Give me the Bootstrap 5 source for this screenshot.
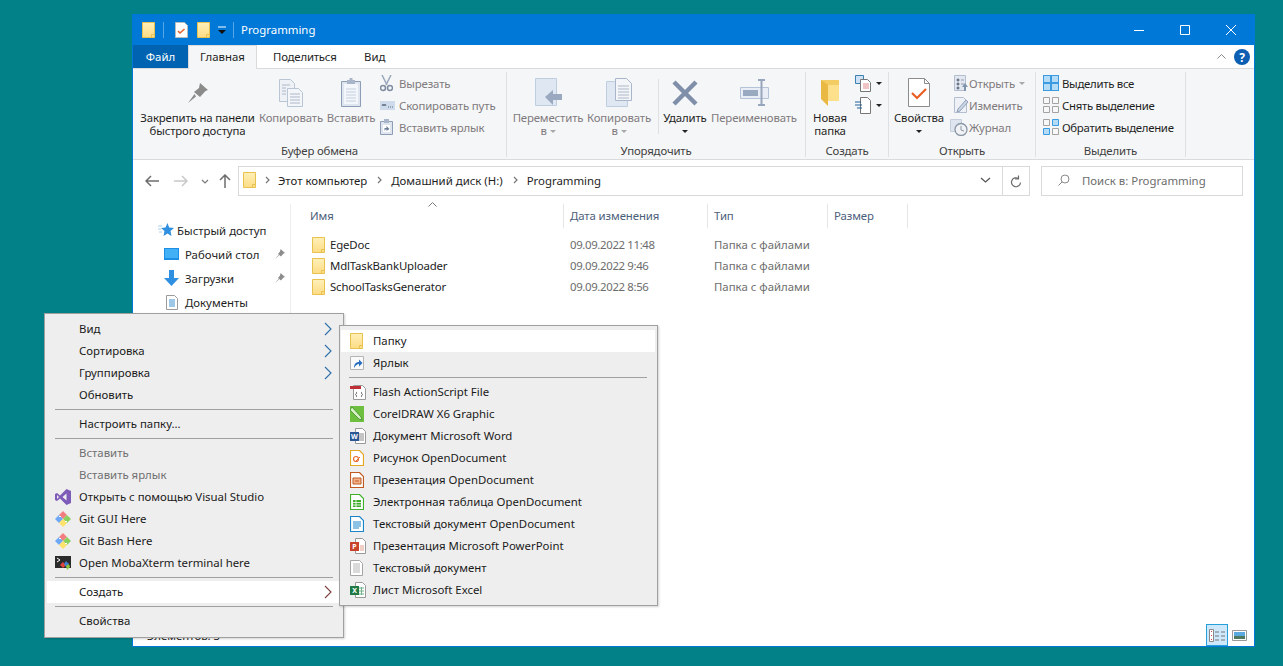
<!DOCTYPE html>
<html lang="ru">
<head>
  <meta charset="UTF-8">
  <meta name="viewport" content="width=device-width, initial-scale=1.0">
  <title>Programming</title>
  <link href="https://cdn.jsdelivr.net/npm/bootstrap@5.3.0/dist/css/bootstrap.min.css" rel="stylesheet">
  <style>
    html, body { height: 666px; overflow: hidden; }
    body { background: #028288; font-family: "Noto Sans", "Open Sans", sans-serif; font-size: 11.4px; color: #1e1e1e; line-height: 13px; }
    svg { display: block; flex: none; }
    .explorer { position: absolute; left: 132px; top: 14px; width: 1123px; height: 633px; background: #fff; border: 1px solid #0078d7; }
    .title-bar { height: 30px; background: #0078d7; color: #fff; padding-left: 9px; }
    .title-sep { width: 1px; height: 16px; background: #5aa5e3; }
    .title-text { padding-bottom: 2px; margin-left: 7px; }
    .win-btn { width: 46px; height: 30px; }
    .tab-row { height: 24px; border-bottom: 1px solid #dadbdc; }
    .tab-item { height: 24px; padding-top: 5px; }
    .tab-file { width: 55px; background: #0063b1; color: #fff; text-align: center; height: 23px; }
    .tab-home { width: 69px; background: #f5f6f7; border: 1px solid #dadbdc; border-bottom: 0; text-align: center; padding-top: 4px; }
    .tab-share { margin-left: 16px; width: 91px; letter-spacing: -.2px; }
    .ribbon { height: 91px; background: #f5f6f7; border-bottom: 1px solid #dadbdc; letter-spacing: -.15px; }
    .rb-group { border-right: 1px solid #dfe0e2; margin: 3px 0 2px; display: flex; flex-direction: column; }
    .rb-body { height: 71px; display: flex; }
    .rb-label { color: #3f3f3f; text-align: center; height: 14px; margin-top: 3px; }
    .rb-large { display: flex; flex-direction: column; align-items: center; text-align: center; padding-top: 6px; white-space: nowrap; }
    .rb-icon { height: 29px; margin-bottom: 4px; display: flex; align-items: center; justify-content: center; }
    .rb-small-col { display: flex; flex-direction: column; }
    .rb-small { height: 22px; display: flex; align-items: center; white-space: nowrap; }
    .rb-slot { width: 19px; flex: none; }
    .muted-txt { color: #7f7a7e; }
    .sel-col { letter-spacing: -.3px; }
    .caret-d { display: inline-block; width: 0; height: 0; border-left: 3px solid transparent; border-right: 3px solid transparent; border-top: 3px solid #222; vertical-align: middle; }
    .caret-d.off { border-top-color: #a8a8a8; }
    .rb-sep { width: 1px; height: 55px; background: #dfe0e2; margin-top: 7px; }
    .addr-row { height: 37px; padding-top: 6px; }
    .addr-nav { height: 30px; padding-left: 12px; }
    .addr-box { height: 30px; border: 1px solid #d9d9d9; white-space: nowrap; padding-bottom: 2px; }
    .addr-main { width: 765px; margin-left: 7px; }
    .addr-drop { margin-right: 11px; }
    .addr-refresh { width: 27px; height: 30px; border: 1px solid #d9d9d9; border-left: 0; }
    .search-box { width: 202px; height: 30px; margin-left: 11px; border: 1px solid #d9d9d9; color: #6d6d6d; padding-bottom: 2px; }
    .body-area { height: 420px; margin-top: 7px; }
    .nav-pane { width: 158px; border-right: 1px solid #ededed; padding-top: 14px; }
    .nav-row { height: 24px; display: flex; align-items: center; white-space: nowrap; }
    .nav-top { padding-left: 25px; }
    .nav-sub { padding-left: 31px; }
    .nav-doc { padding-left: 33px; }
    .nav-pin { margin-left: auto; margin-right: 5px; }
    .file-head { height: 24px; color: #4c607a; position: relative; letter-spacing: -.1px; }
    .head-col { height: 24px; border-right: 1px solid #e5e5e5; padding-left: 6px; padding-bottom: 2px; display: flex; align-items: center; }
    .head-name { width: 273px; padding-left: 19px; }
    .sort-up { position: absolute; left: 137px; top: -2px; }
    .file-rows { margin-top: 6px; }
    .file-row { height: 21px; display: flex; align-items: center; white-space: nowrap; }
    .cell-name { width: 273px; padding-left: 21px; display: flex; align-items: center; color: #222; letter-spacing: -.15px; }
    .cell-date { width: 144px; padding-left: 6px; color: #6d6d6d; letter-spacing: -.35px; }
    .cell-type { padding-left: 6px; color: #6d6d6d; }
    .status-bar { height: 22px; margin-top: auto; padding-left: 14px; }
    .view-on { width: 22px; height: 22px; background: #cde8fa; border: 1px solid #26a0da; margin-left: auto; margin-right: 4px; }
    .view-off { width: 15px; margin-right: 7px; }
    .ctx { position: absolute; background: #eee; border: 1px solid #a0a0a0; padding: 4px 2px; color: #1a1a1a; box-shadow: 1px 1px 2px rgba(0,0,0,.18); }
    .ctx-view { left: 44px; top: 313px; width: 300px; height: 325px; }
    .ctx-new { left: 339px; top: 325px; width: 319px; height: 281px; padding-left: 1px; }
    .mi { height: 22px; padding-bottom: 2px; display: flex; align-items: center; white-space: nowrap; }
    .mi.hot { background: #fff; }
    .mi.off { color: #6f6f6f; }
    .mi-slot { width: 32px; flex: none; padding-left: 8px; }
    .mi-slot svg { margin-top: 2px; }
    .ctx-new .mi-slot { padding-left: 9px; }
    .mi-sep { height: 1px; background: #a0a0a0; margin: 3px 8px; }
    .mi-arrow { margin-left: auto; margin-right: 9px; margin-top: 2px; }
    .ml2 { margin-left: 2px; }
    .ml3 { margin-left: 3px; }
    .ml4 { margin-left: 4px; }
    .ml5 { margin-left: 5px; }
    .ml6 { margin-left: 6px; }
    .ml7 { margin-left: 7px; }
    .ml8 { margin-left: 8px; }
    .ml9 { margin-left: 9px; }
    .ml10 { margin-left: 10px; }
    .ml11 { margin-left: 11px; }
    .ml12 { margin-left: 12px; }
    .ml13 { margin-left: 13px; }
    .ml15 { margin-left: 15px; }
    .ml16 { margin-left: 16px; }
    .w38 { width: 38px; }
    .w48 { width: 48px; }
    .w50 { width: 50px; }
    .w52 { width: 52px; }
    .w66 { width: 66px; }
    .w70 { width: 70px; }
    .w76 { width: 76px; }
    .w80 { width: 80px; }
    .w83 { width: 83px; }
    .w90 { width: 90px; }
    .w117 { width: 117px; }
    .w120 { width: 120px; }
    .w144 { width: 144px; }
    .w147 { width: 147px; }
    .w150 { width: 150px; }
    .w299 { width: 299px; }
    .w374 { width: 374px; }
  </style>
</head>
<body>

  <svg width="0" height="0" class="position-absolute">
    <defs>
      <linearGradient id="fy" x1="0" y1="0" x2="0" y2="1"><stop offset="0" stop-color="#fff0b8"/><stop offset="1" stop-color="#fddc85"/></linearGradient>
      <symbol id="folder" viewBox="0 0 13 16">
        <path d="M.5.5h12v15H.5z" fill="url(#fy)" stroke="#e9c14f"/>
        <path d="M9.5 15.5v-3h3" fill="none" stroke="#e9c14f"/>
      </symbol>
      <symbol id="pin" viewBox="0 0 10 10">
        <path d="M5.500 0l4.500 4-1.500.5L6 7.500 3 5l2-2.500zM3.500 6L0 10l4-3.500z" fill="#8c8c8c"/>
      </symbol>
      <symbol id="gitlogo" viewBox="0 0 16 16">
        <path d="M8 0l4 4-4 4-4-4z" fill="#f37e80"/><path d="M0 8l4-4 4 4-4 4z" fill="#6ea8f7"/>
        <path d="M8 8l4-4 4 4-4 4z" fill="#8bd05f"/><path d="M4 12l4-4 4 4-4 4z" fill="#fde26c"/>
        <path d="M4 5h2v1H4zM10 10h2v1h-2z" fill="#fff"/>
      </symbol>
      <symbol id="crumb" viewBox="0 0 5 8"><path d="M1 1l3 3-3 3" fill="none" stroke="#777" stroke-width="1.200"/></symbol>
      <symbol id="arrow-blue" viewBox="0 0 8 14"><path d="M1 1l6 6-6 6" fill="none" stroke="#2d6da8" stroke-width="1.100"/></symbol>
    </defs>
  </svg>

  <div class="explorer d-flex flex-column">
    <!-- заголовок окна -->
    <div class="title-bar d-flex align-items-center">
      <svg width="13" height="16"><use href="#folder"/></svg>
      <span class="title-sep ml8"></span>
      <svg class="ml11" width="13" height="16" viewBox="0 0 13 16"><path d="M.5.500h9l3 3v12H.500z" fill="#fff" stroke="#bbb"/><path d="M3 9l2 2 4.500-4" fill="none" stroke="#e8612c" stroke-width="1.500"/></svg>
      <svg class="ml9" width="13" height="16"><use href="#folder"/></svg>
      <svg class="ml8" width="8" height="9" viewBox="0 0 8 9"><path d="M0 1h8" stroke="#fff"/><path d="M0 4h8L4 8z" fill="#111"/></svg>
      <span class="title-sep ml7"></span>
      <span class="title-text">Programming</span>
      <div class="ms-auto d-flex">
        <div class="win-btn d-flex align-items-center justify-content-center"><svg width="10" height="10"><path d="M0 5.500h10" stroke="#fff"/></svg></div>
        <div class="win-btn d-flex align-items-center justify-content-center"><svg width="10" height="10"><path d="M.5.500h9v9h-9z" fill="none" stroke="#fff"/></svg></div>
        <div class="win-btn d-flex align-items-center justify-content-center"><svg width="10" height="10"><path d="M0 0l10 10M10 0L0 10" stroke="#fff"/></svg></div>
      </div>
    </div>

    <!-- вкладки -->
    <div class="tab-row d-flex">
      <div class="tab-item tab-file">Файл</div>
      <div class="tab-item tab-home">Главная</div>
      <div class="tab-item tab-share">Поделиться</div>
      <div class="tab-item">Вид</div>
      <div class="ms-auto d-flex align-items-center">
        <svg width="9" height="5" viewBox="0 0 9 5"><path d="M.5 4.500l4-4 4 4" fill="none" stroke="#8a8a8a"/></svg>
        <svg class="ms-2 me-1" width="16" height="16" viewBox="0 0 16 16"><circle cx="8" cy="8" r="8" fill="#0d5fb3"/><text x="8" y="12.500" text-anchor="middle" fill="#fff" font-size="12" font-weight="700" font-family="Noto Sans, sans-serif">?</text></svg>
      </div>
    </div>

    <!-- лента -->
    <div class="ribbon d-flex">
      <div class="rb-group w374">
        <div class="rb-body">
          <div class="rb-large w117 ml6">
            <div class="rb-icon"><svg width="20" height="20" viewBox="0 0 20 20"><path d="M12 0l8 7-2.500 1L12 14 6 9l5-4zM6.500 11L0 20l8-6.500z" fill="#8b8b8b"/></svg></div>
            <div>Закрепить на панели<br>быстрого доступа</div>
          </div>
          <div class="rb-large muted-txt w70">
            <div class="rb-icon"><svg width="24" height="28" viewBox="0 0 24 28"><path d="M.5.500h11l4 4v18H.5z" fill="#eef1f6" stroke="#b9c4d4"/><path d="M8.500 9.500h11l4 4v14h-15z" fill="#f3f5f9" stroke="#b9c4d4"/><path d="M11 15h10M11 18h10M11 21h10M11 24h10M3 6h8M3 9h4M3 12h4M3 15h4" stroke="#aeb8c8"/></svg></div>
            <div>Копировать</div>
          </div>
          <div class="rb-large muted-txt w50">
            <div class="rb-icon"><svg width="20" height="29" viewBox="0 0 20 29"><path d="M.5 3.500h19v25H.5z" fill="#dfe5ef" stroke="#8d9db5"/><path d="M3 6h14v20H3z" fill="#f3f6fb"/><path d="M5 11h10M5 14h10M5 17h10M5 20h10M5 23h10" stroke="#c6d0df"/><path d="M6 2h8v4H6z M8.500 0h3v2h-3z" fill="#a9b6c9"/></svg></div>
            <div>Вставить</div>
          </div>
          <div class="rb-small-col muted-txt ml4">
            <div class="rb-small"><span class="rb-slot"><svg width="13" height="17" viewBox="0 0 13 17"><path d="M2 0l5 10M11 0L6 10" stroke="#9aa7bb" stroke-width="1.500" fill="none"/><circle cx="3" cy="13" r="2.500" fill="none" stroke="#7e8ba0" stroke-width="1.500"/><circle cx="10" cy="13" r="2.500" fill="none" stroke="#7e8ba0" stroke-width="1.500"/></svg></span>Вырезать</div>
            <div class="rb-small"><span class="rb-slot"><svg width="15" height="9" viewBox="0 0 15 9"><path d="M0 0h15v9H0z" fill="#cfdaea"/><path d="M2 5l1-2 1 2 1-2 1 2M8 6h1M10 6h1M12 6h1" stroke="#5e7086" fill="none"/></svg></span>Скопировать путь</div>
            <div class="rb-small"><span class="rb-slot"><svg width="13" height="16" viewBox="0 0 13 16"><path d="M.5 2.500h12v13H.5z" fill="#dfe5ef" stroke="#8d9db5"/><path d="M4 0h5v4H4z" fill="#a9b6c9"/><path d="M3 6h7v7H3z" fill="#fff"/><path d="M4.500 12V9h2V7l3 3-3 2v-1.500h-1z" fill="#6d7f99"/></svg></span>Вставить ярлык</div>
          </div>
        </div>
        <div class="rb-label">Буфер обмена</div>
      </div>

      <div class="rb-group w299">
        <div class="rb-body">
          <div class="rb-large muted-txt w76 ml3">
            <div class="rb-icon"><svg width="27" height="29" viewBox="0 0 27 29"><path d="M.5.500h21v27H.5z" fill="#dfe7f3" stroke="#bfcde0"/><path d="M10 19l8-7v4h9v6h-9v5z" fill="#9aa9bf"/></svg></div>
            <div>Переместить<br>в <span class="caret-d off"></span></div>
          </div>
          <div class="rb-large muted-txt w66">
            <div class="rb-icon"><svg width="27" height="29" viewBox="0 0 27 29"><path d="M.5 3.500h21v25H.5z" fill="#dfe7f3" stroke="#bfcde0"/><path d="M9.500.500h11l5 5v17h-16z" fill="#f3f5f9" stroke="#a9b6c9"/><path d="M12 8h11M12 11h11M12 14h11M12 17h11M12 20h11" stroke="#aeb8c8"/></svg></div>
            <div>Копировать<br>в <span class="caret-d off"></span></div>
          </div>
          <div class="rb-sep ml6"></div>
          <div class="rb-large w48 ml2">
            <div class="rb-icon"><svg width="26" height="26" viewBox="0 0 26 26"><path d="M2 2l22 22M24 2L2 24" stroke="#7f8fa9" stroke-width="4.500"/></svg></div>
            <div>Удалить<br><span class="caret-d"></span></div>
          </div>
          <div class="rb-large muted-txt w90">
            <div class="rb-icon"><svg width="29" height="27" viewBox="0 0 29 27"><path d="M.5 8.500h28v11H.5z" fill="#e9eef6" stroke="#b5c3d8"/><path d="M3 11h15v6H3z" fill="#99a9c0"/><path d="M18 1h7M18 26h7M21.500 1v25" stroke="#97a6bc" stroke-width="2"/></svg></div>
            <div>Переименовать</div>
          </div>
        </div>
        <div class="rb-label">Упорядочить</div>
      </div>

      <div class="rb-group w83">
        <div class="rb-body">
          <div class="rb-large w38 ml5">
            <div class="rb-icon"><svg width="19" height="27" viewBox="0 0 19 27"><path d="M0 1h18v21H7z" fill="#f3cd63"/><path d="M0 1l7 5v21L0 20z" fill="#e9b944"/><path d="M7 6h11v16H7z" fill="#fde08c"/></svg></div>
            <div>Новая<br>папка</div>
          </div>
          <div class="rb-small-col ml6">
            <div class="rb-small"><svg width="17" height="17" viewBox="0 0 17 17"><path d="M.5.500h8v8h-8z" fill="#cfe2f5" stroke="#3c7fb1"/><path d="M5.500 4.500h7l3 3v9h-10z" fill="#fff" stroke="#777"/><path d="M8 9h6M8 11h6M8 13h6" stroke="#e38b8b"/></svg><span class="caret-d ms-1"></span></div>
            <div class="rb-small"><svg width="17" height="17" viewBox="0 0 17 17"><path d="M5.500.500h7l3 3v13h-10z" fill="#fff" stroke="#777"/><path d="M0 5h6M0 8h7M2 11h5" stroke="#1f5f9e"/></svg><span class="caret-d ms-1"></span></div>
          </div>
        </div>
        <div class="rb-label">Создать</div>
      </div>

      <div class="rb-group w147">
        <div class="rb-body">
          <div class="rb-large w52 ml4">
            <div class="rb-icon"><svg width="22" height="29" viewBox="0 0 22 29"><path d="M.5.500h16l5 5v23H.5z" fill="#fff" stroke="#8c8c8c"/><path d="M16.500.500v5h5" fill="none" stroke="#8c8c8c"/><path d="M4 15l5 5 9-9" fill="none" stroke="#ea5f24" stroke-width="2.200"/></svg></div>
            <div>Свойства<br><span class="caret-d"></span></div>
          </div>
          <div class="rb-small-col muted-txt ml5">
            <div class="rb-small"><span class="rb-slot"><svg class="ms-1" width="15" height="16" viewBox="0 0 15 16"><path d="M.5.500h11v15H.5z" fill="#e3e8f0" stroke="#b3bfd0"/><path d="M3 4h2v2H3zM3 8h2v2H3zM3 12h2v2H3zM7 5h3M7 9h3" stroke="#8f9db3"/><path d="M8 12l3-4 3 4h-2v4h-2v-4z" fill="#8194ad"/></svg></span>Открыть <span class="caret-d off ms-1"></span></div>
            <div class="rb-small"><span class="rb-slot"><svg class="ms-1" width="15" height="16" viewBox="0 0 15 16"><path d="M.5.500h9l3 3v12H.5z" fill="#eef2f7" stroke="#b3bfd0"/><path d="M4 12l8-9 2 2-8 9-3 1z" fill="#c9d5e5" stroke="#90a0b6"/></svg></span>Изменить</div>
            <div class="rb-small"><span class="rb-slot"><svg width="18" height="17" viewBox="0 0 18 17"><path d="M.5.500h11v12H.5z" fill="#dfe5ee" stroke="#c5cfdc"/><circle cx="11" cy="10.500" r="6" fill="#f0f2f5" stroke="#8a96a6" stroke-width="1.300"/><path d="M11 7v4l3 1" fill="none" stroke="#8a96a6"/></svg></span>Журнал</div>
          </div>
        </div>
        <div class="rb-label">Открыть</div>
      </div>

      <div class="rb-group w150">
        <div class="rb-body ml7">
          <div class="rb-small-col sel-col">
            <div class="rb-small"><span class="rb-slot"><svg width="16" height="16" viewBox="0 0 16 16"><path d="M0 0h16v16H0z" fill="#3a9be0"/><path d="M1 1h6v6H1zM9 1h6v6H9zM1 9h6v6H1zM9 9h6v6H9z" fill="#b5dcf7"/></svg></span>Выделить все</div>
            <div class="rb-small"><span class="rb-slot"><svg width="16" height="16" viewBox="0 0 16 16"><path d="M.5.500h6v6h-6zM9.500.500h6v6h-6zM.5 9.500h6v6h-6zM9.500 9.500h6v6h-6z" fill="#f8f8f8" stroke="#a3a3a3"/></svg></span>Снять выделение</div>
            <div class="rb-small"><span class="rb-slot"><svg width="16" height="16" viewBox="0 0 16 16"><path d="M.5.500h6v6h-6zM9.500 9.500h6v6h-6z" fill="#f8f8f8" stroke="#a3a3a3"/><path d="M9.500.500h6v6h-6zM.5 9.500h6v6h-6z" fill="#b5dcf7" stroke="#3a9be0"/></svg></span>Обратить выделение</div>
          </div>
        </div>
        <div class="rb-label">Выделить</div>
      </div>
    </div>

    <!-- адресная строка -->
    <div class="addr-row d-flex align-items-start">
      <div class="addr-nav d-flex align-items-center">
        <svg width="14" height="12" viewBox="0 0 14 12"><path d="M1 6h13M6 1L1 6l5 5" fill="none" stroke="#6d6d6d" stroke-width="1.500"/></svg>
        <svg class="ml15" width="14" height="12" viewBox="0 0 14 12"><path d="M0 6h13M8 1l5 5-5 5" fill="none" stroke="#c8c8c8" stroke-width="1.500"/></svg>
        <svg class="ml13" width="8" height="5" viewBox="0 0 8 5"><path d="M1 1l3 3 3-3" fill="none" stroke="#7a7a7a" stroke-width="1.200"/></svg>
        <svg class="ml10" width="12" height="14" viewBox="0 0 12 14"><path d="M6 14V1M1 6l5-5 5 5" fill="none" stroke="#6d6d6d" stroke-width="1.500"/></svg>
      </div>
      <div class="addr-box addr-main d-flex align-items-center">
        <svg class="ms-1" width="13" height="16"><use href="#folder"/></svg>
        <svg class="ml9" width="5" height="8"><use href="#crumb"/></svg>
        <span class="ml8">Этот компьютер</span>
        <svg class="ml10" width="5" height="8"><use href="#crumb"/></svg>
        <span class="ml9">Домашний диск (H:)</span>
        <svg class="ml10" width="5" height="8"><use href="#crumb"/></svg>
        <span class="ml9">Programming</span>
        <svg class="ms-auto addr-drop" width="11" height="6" viewBox="0 0 11 6"><path d="M1 1l4.500 4L10 1" fill="none" stroke="#555" stroke-width="1.200"/></svg>
      </div>
      <div class="addr-refresh d-flex align-items-center justify-content-center">
        <svg width="12" height="13" viewBox="0 0 12 13"><path d="M10.500 7.500a4.500 4.500 0 1 1-2-4M8.500 .5v3.500H5" fill="none" stroke="#6d6d6d" stroke-width="1.200"/></svg>
      </div>
      <div class="search-box d-flex align-items-center">
        <svg class="ml16" width="12" height="12" viewBox="0 0 12 12"><circle cx="7" cy="5" r="4" fill="none" stroke="#8a8a8a"/><path d="M4 8l-3.500 3.500" stroke="#8a8a8a"/></svg>
        <span class="ml12">Поиск в: Programming</span>
      </div>
    </div>

    <!-- панель навигации и список файлов -->
    <div class="body-area d-flex">
      <div class="nav-pane">
        <div class="nav-row nav-top">
          <svg width="16" height="14" viewBox="0 0 16 14"><path d="M9.500 0l1.700 4.500L16 5l-3.500 3 1 5-4-2.500L5.500 13l1-5L3 5l4.500-.5z" fill="#2f8fe0"/><path d="M0 3h4M0 6h3M1 9h3" stroke="#a8d0f0"/></svg>
          <span class="ml3">Быстрый доступ</span>
        </div>
        <div class="nav-row nav-sub">
          <svg width="15" height="12" viewBox="0 0 15 12"><path d="M0 0h15v12H0z" fill="#1b8fe6"/><path d="M1 1h13v9H1z" fill="#41b0f5"/></svg>
          <span class="ml6">Рабочий стол</span>
          <svg class="nav-pin" width="10" height="10"><use href="#pin"/></svg>
        </div>
        <div class="nav-row nav-sub">
          <svg width="15" height="16" viewBox="0 0 15 16"><path d="M5 0h5v8h5l-7.500 8L0 8h5z" fill="#2f8fe0"/></svg>
          <span class="ml6">Загрузки</span>
          <svg class="nav-pin" width="10" height="10"><use href="#pin"/></svg>
        </div>
        <div class="nav-row nav-doc">
          <svg width="12" height="15" viewBox="0 0 12 15"><path d="M.5.500h8l3 3v11H.5z" fill="#fff" stroke="#9a9a9a"/><path d="M3 5h6M3 7h6M3 9h6M3 11h6" stroke="#3d8fd0"/></svg>
          <span class="ml7">Документы</span>
        </div>
      </div>

      <div class="flex-grow-1">
        <div class="file-head d-flex">
          <div class="head-col head-name">Имя</div>
          <div class="head-col w144">Дата изменения</div>
          <div class="head-col w120">Тип</div>
          <div class="head-col w80">Размер</div>
          <svg class="sort-up" width="9" height="5" viewBox="0 0 9 5"><path d="M.5 4.500l4-4 4 4" fill="none" stroke="#7a7a7a"/></svg>
        </div>
        <div class="file-rows">
          <div class="file-row"><div class="cell-name"><svg width="13" height="16"><use href="#folder"/></svg><span class="ml5">EgeDoc</span></div><div class="cell-date">09.09.2022 11:48</div><div class="cell-type">Папка с файлами</div></div>
          <div class="file-row"><div class="cell-name"><svg width="13" height="16"><use href="#folder"/></svg><span class="ml5">MdlTaskBankUploader</span></div><div class="cell-date">09.09.2022 9:46</div><div class="cell-type">Папка с файлами</div></div>
          <div class="file-row"><div class="cell-name"><svg width="13" height="16"><use href="#folder"/></svg><span class="ml5">SchoolTasksGenerator</span></div><div class="cell-date">09.09.2022 8:56</div><div class="cell-type">Папка с файлами</div></div>
        </div>
      </div>
    </div>

    <!-- строка состояния -->
    <div class="status-bar d-flex align-items-center">
      <span>Элементов: 3</span>
      <div class="view-on d-flex align-items-center justify-content-center">
        <svg width="17" height="13" viewBox="0 0 17 13"><path d="M.5.500h4v12h-4z" fill="#fff" stroke="#888"/><path d="M2 2.500h1M2 6.500h1M2 10.500h1" stroke="#c44"/><path d="M6 3h4M12 3h4M6 7h4M12 7h4M6 11h4M12 11h4" stroke="#777"/></svg>
      </div>
      <div class="view-off">
        <svg width="15" height="11" viewBox="0 0 15 11"><path d="M.5.500h14v10H.5z" fill="#fff" stroke="#999"/><path d="M2 2h11v4H2z" fill="#5aaae0"/><path d="M2 6h11v3H2z" fill="#4f7a5f"/></svg>
      </div>
    </div>
  </div>

  <!-- контекстное меню -->
  <div class="ctx ctx-view">
    <div class="mi"><span class="mi-slot"></span>Вид<svg class="mi-arrow" width="8" height="14"><use href="#arrow-blue"/></svg></div>
    <div class="mi"><span class="mi-slot"></span>Сортировка<svg class="mi-arrow" width="8" height="14"><use href="#arrow-blue"/></svg></div>
    <div class="mi"><span class="mi-slot"></span>Группировка<svg class="mi-arrow" width="8" height="14"><use href="#arrow-blue"/></svg></div>
    <div class="mi"><span class="mi-slot"></span>Обновить</div>
    <div class="mi-sep"></div>
    <div class="mi"><span class="mi-slot"></span>Настроить папку...</div>
    <div class="mi-sep"></div>
    <div class="mi off"><span class="mi-slot"></span>Вставить</div>
    <div class="mi off"><span class="mi-slot"></span>Вставить ярлык</div>
    <div class="mi"><span class="mi-slot"><svg width="16" height="16" viewBox="0 0 16 16"><path d="M11.500 0L16 2v12l-4.500 2L5 9.500 2 12l-2-1V5l2-1 3 2.500z" fill="#7e5bb8"/><path d="M11.500 4.500L7.500 8l4 3.500zM2 6v4l2-2z" fill="#eee"/></svg></span>Открыть с помощью Visual Studio</div>
    <div class="mi"><span class="mi-slot"><svg width="16" height="16"><use href="#gitlogo"/></svg></span>Git GUI Here</div>
    <div class="mi"><span class="mi-slot"><svg width="16" height="16"><use href="#gitlogo"/></svg></span>Git Bash Here</div>
    <div class="mi"><span class="mi-slot"><svg width="16" height="16" viewBox="0 0 16 16"><path d="M0 1h16v12H0z" fill="#2b2b2b"/><path d="M2 3l3 2-3 2" fill="none" stroke="#fff"/><path d="M8 7l3 3-3 3-3-3z" fill="#e0453a"/><path d="M11 6l3 3-3 3-2-3z" fill="#3f7fd0"/><path d="M11 11l3-2 1 3-3 3z" fill="#8fc63f"/></svg></span>Open MobaXterm terminal here</div>
    <div class="mi-sep"></div>
    <div class="mi hot"><span class="mi-slot"></span>Создать<svg class="mi-arrow" width="8" height="14" viewBox="0 0 8 14"><path d="M1 1l6 6-6 6" fill="none" stroke="#7d3f3f" stroke-width="1.100"/></svg></div>
    <div class="mi-sep"></div>
    <div class="mi"><span class="mi-slot"></span>Свойства</div>
  </div>

  <!-- подменю Создать -->
  <div class="ctx ctx-new">
    <div class="mi hot"><span class="mi-slot"><svg width="13" height="16"><use href="#folder"/></svg></span>Папку</div>
    <div class="mi"><span class="mi-slot"><svg width="14" height="14" viewBox="0 0 14 14"><path d="M.5.500h13v13H.5z" fill="#fafafa" stroke="#b5b5b5"/><path d="M4 12c0-4 2-6 5-6V3.500L12.500 7 9 10.500V8c-2 0-3 1-5 4z" fill="#2a6fc0"/></svg></span>Ярлык</div>
    <div class="mi-sep"></div>
    <div class="mi"><span class="mi-slot"><svg width="16" height="16" viewBox="0 0 16 16"><path d="M3.500 1.500h9l3 3v11h-12z" fill="#fff" stroke="#999"/><path d="M0 2h11v3H0z" fill="#bf2f35"/><path d="M7 8c-1 0 0 2-1.500 2.500C7 11 6 13 7 13M11 8c1 0 0 2 1.500 2.500C11 11 12 13 11 13" fill="none" stroke="#666"/></svg></span>Flash ActionScript File</div>
    <div class="mi"><span class="mi-slot"><svg width="14" height="16" viewBox="0 0 14 16"><path d="M0 0h14v16H0z" fill="#6ebf3f"/><path d="M2 1l9 10 1 3-3-1L0 4z" fill="#d9efc5" stroke="#3f8f2a" stroke-width=".8"/></svg></span>CorelDRAW X6 Graphic</div>
    <div class="mi"><span class="mi-slot"><svg width="16" height="16" viewBox="0 0 16 16"><path d="M5.500.500h7l3 3v12h-10z" fill="#fff" stroke="#999"/><path d="M9 6h5M9 8h5M9 10h5M9 12h5" stroke="#8a8a8a"/><path d="M0 4h9v9H0z" fill="#2b5797"/><text x="4.500" y="11" text-anchor="middle" font-size="7" font-weight="700" fill="#fff" font-family="Noto Sans, sans-serif">W</text></svg></span>Документ Microsoft Word</div>
    <div class="mi"><span class="mi-slot"><svg width="14" height="16" viewBox="0 0 14 16"><path d="M.5.500h9l4 4v11H.5z" fill="#fff" stroke="#e5a823" stroke-width="1.200"/><circle cx="6" cy="9" r="2.500" fill="none" stroke="#e86a2b" stroke-width="1.200"/><path d="M5 12l5-5" stroke="#e86a2b"/></svg></span>Рисунок OpenDocument</div>
    <div class="mi"><span class="mi-slot"><svg width="14" height="16" viewBox="0 0 14 16"><path d="M.5.500h9l4 4v11H.5z" fill="#fff" stroke="#c0581f" stroke-width="1.200"/><path d="M3 6h8v6H3z" fill="#f2b38c" stroke="#c0581f"/><path d="M5 9h4" stroke="#c0581f"/></svg></span>Презентация OpenDocument</div>
    <div class="mi"><span class="mi-slot"><svg width="14" height="16" viewBox="0 0 14 16"><path d="M.5.500h9l4 4v11H.5z" fill="#fff" stroke="#3fae2a" stroke-width="1.200"/><path d="M3 6h8v7H3z" fill="#3fae2a"/><path d="M3 8.500h8M3 11h8M6 6v7" stroke="#fff" stroke-width=".8"/></svg></span>Электронная таблица OpenDocument</div>
    <div class="mi"><span class="mi-slot"><svg width="14" height="16" viewBox="0 0 14 16"><path d="M.5.500h9l4 4v11H.5z" fill="#fff" stroke="#1a86c8" stroke-width="1.200"/><path d="M3 6h8M3 8h8M3 10h8M3 12h6" stroke="#1a86c8"/></svg></span>Текстовый документ OpenDocument</div>
    <div class="mi"><span class="mi-slot"><svg width="16" height="16" viewBox="0 0 16 16"><path d="M5.500.500h7l3 3v12h-10z" fill="#fff" stroke="#999"/><path d="M10 8h4M10 10h4M10 12h4" stroke="#e3a08a"/><path d="M0 4h9v9H0z" fill="#c9432a"/><text x="4.500" y="11" text-anchor="middle" font-size="7" font-weight="700" fill="#fff" font-family="Noto Sans, sans-serif">P</text></svg></span>Презентация Microsoft PowerPoint</div>
    <div class="mi"><span class="mi-slot"><svg width="13" height="16" viewBox="0 0 13 16"><path d="M.5.500h9l3 3v12H.5z" fill="#fff" stroke="#a5a5a5"/><path d="M3 4h7M3 6h7M3 8h7M3 10h7M3 12h7" stroke="#b5b5b5"/></svg></span>Текстовый документ</div>
    <div class="mi"><span class="mi-slot"><svg width="16" height="16" viewBox="0 0 16 16"><path d="M5.500.500h7l3 3v12h-10z" fill="#fff" stroke="#999"/><path d="M9 6h5M9 9h5M9 12h5M11.500 5v8" stroke="#6fb28a"/><path d="M0 4h9v9H0z" fill="#1f7a45"/><text x="4.500" y="11" text-anchor="middle" font-size="7" font-weight="700" fill="#fff" font-family="Noto Sans, sans-serif">X</text></svg></span>Лист Microsoft Excel</div>
  </div>

  <script src="https://cdn.jsdelivr.net/npm/bootstrap@5.3.0/dist/js/bootstrap.bundle.min.js"></script>
</body>
</html>
